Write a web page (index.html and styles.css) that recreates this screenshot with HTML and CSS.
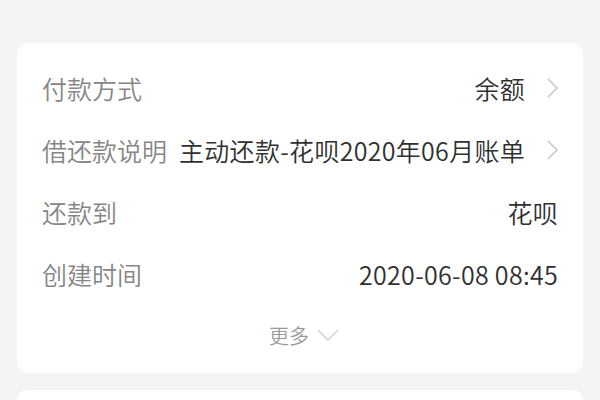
FILE: index.html
```html
<!DOCTYPE html>
<html lang="zh-CN">
<head>
<meta charset="utf-8">
<link rel="stylesheet" href="styles.css">
</head>
<body>
<div class="page">
  <div class="card">
    <div class="row">
      <span class="label">付款方式</span>
      <span class="value">余额</span>
      <svg class="arrow" viewBox="0 0 11 20" width="11" height="20"><path d="M1 1 L10 10 L1 19" fill="none" stroke="#c4c4c4" stroke-width="1.5"/></svg>
    </div>
    <div class="row">
      <span class="label">借还款说明</span>
      <span class="value">主动还款-花呗2020年06月账单</span>
      <svg class="arrow" viewBox="0 0 11 20" width="11" height="20"><path d="M1 1 L10 10 L1 19" fill="none" stroke="#c4c4c4" stroke-width="1.5"/></svg>
    </div>
    <div class="row">
      <span class="label">还款到</span>
      <span class="value">花呗</span>
    </div>
    <div class="row">
      <span class="label">创建时间</span>
      <span class="value">2020-06-08 08:45</span>
    </div>
    <div class="more">
      <span>更多</span>
      <svg viewBox="0 0 22 12" width="22" height="12"><path d="M1 1 L11 11 L21 1" fill="none" stroke="#cccccc" stroke-width="1.4"/></svg>
    </div>
  </div>
  <div class="card card-next"></div>
</div>
</body>
</html>
```

FILE: styles.css
```css
html, body {
  margin: 0;
  padding: 0;
  background: #f4f4f4;
}
body {
  font-family: "Noto Sans CJK SC", "Noto Sans", sans-serif;
  font-weight: 350;
  overflow: hidden;
  height: 400px;
}
.page {
  height: 400px;
  box-sizing: border-box;
  overflow: hidden;
  padding: 43px 17px 0;
  display: flex;
  flex-direction: column;
  gap: 17px;
}
.card {
  background: #ffffff;
  border-radius: 11px;
  padding: 14px 25px 8px;
  flex: none;
}
.row {
  height: 62px;
  display: flex;
  align-items: center;
  font-size: 25px;
}
.label {
  color: #868686;
  flex: 1 1 auto;
  white-space: nowrap;
}
.value {
  color: #303030;
  white-space: nowrap;
  margin-left: 12px;
  letter-spacing: 0.3px;
}
.arrow {
  margin-left: 22px;
  flex: none;
}
.more {
  height: 60px;
  display: flex;
  align-items: center;
  justify-content: center;
  gap: 8px;
  color: #9a9a9a;
  font-size: 20px;
  padding-left: 8px;
}
.card-next {
  flex: 1 1 auto;
  border-radius: 11px 11px 0 0;
  padding: 0;
}
```
